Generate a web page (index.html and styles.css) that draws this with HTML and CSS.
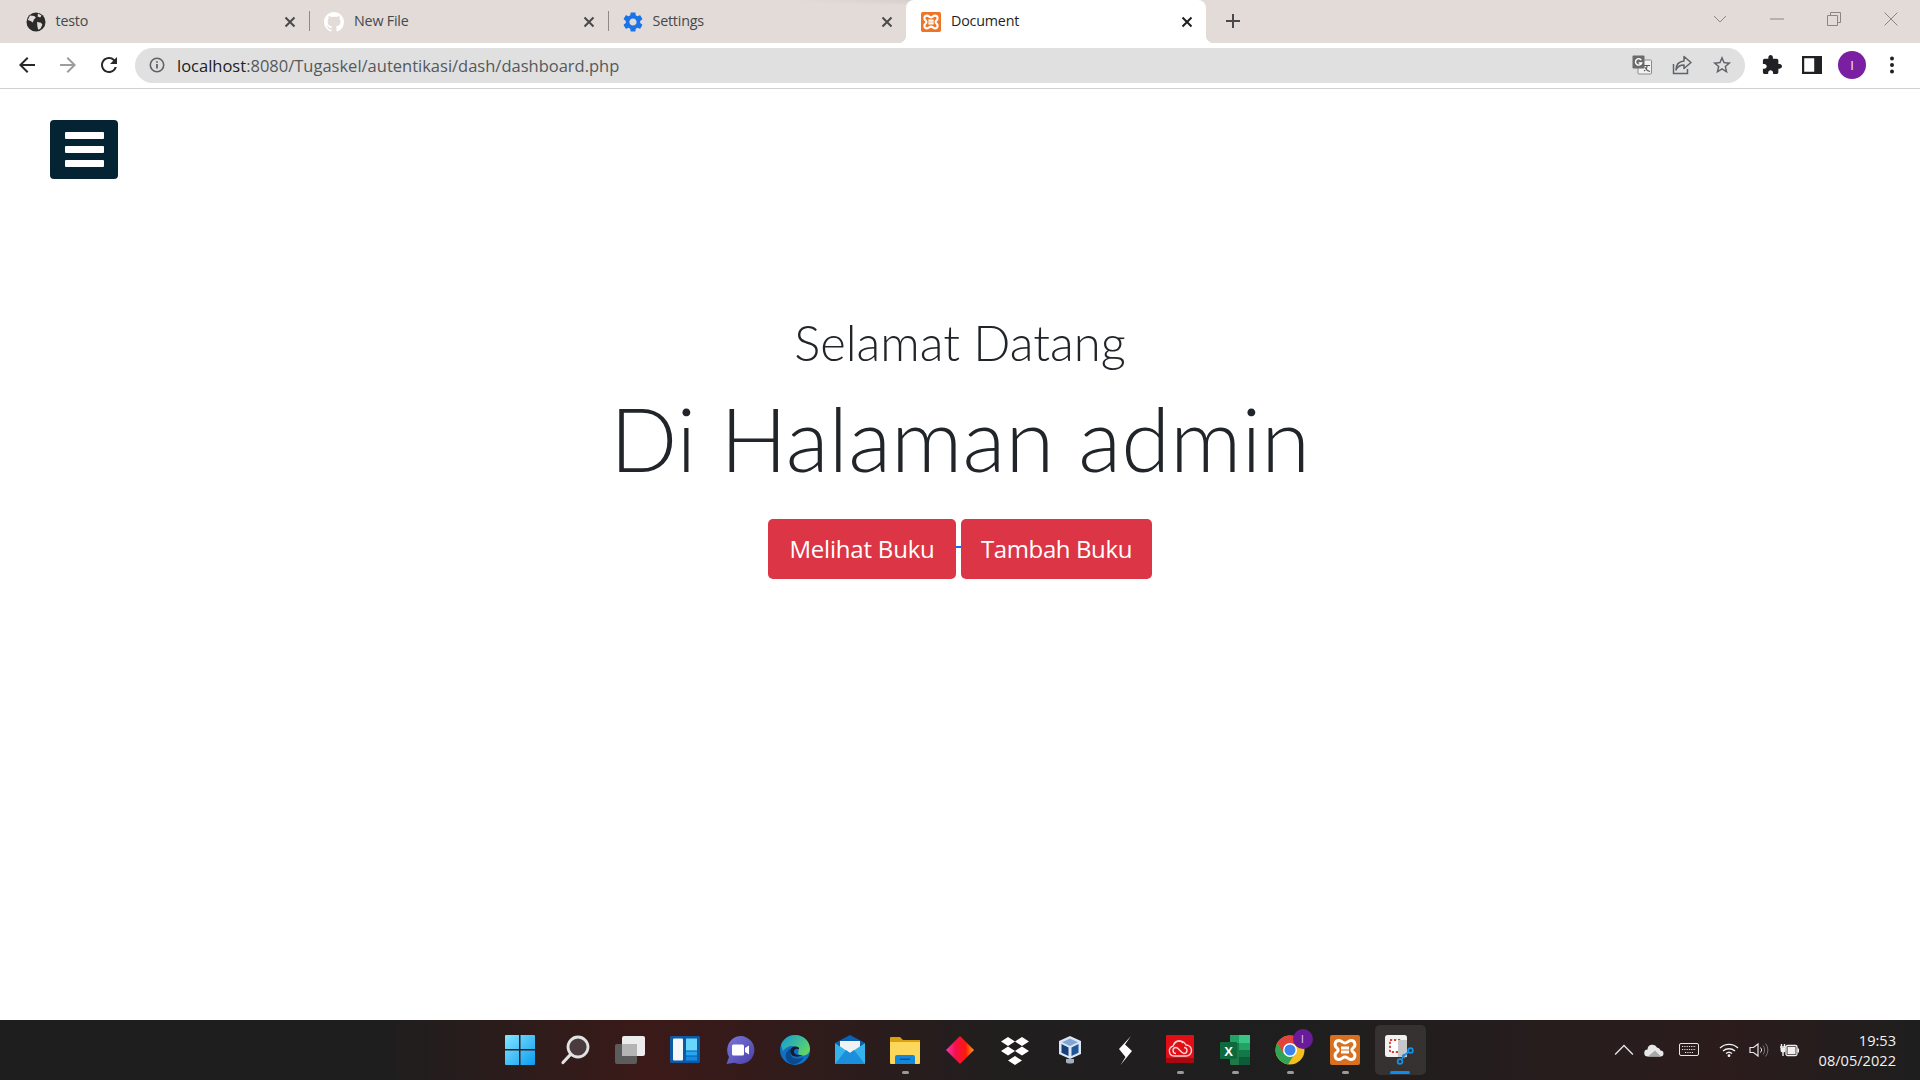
FILE: index.html
```html
<!DOCTYPE html>
<html lang="id">
<head>
<meta charset="utf-8">
<title>Document</title>
<link rel="stylesheet" href="styles.css">
</head>
<body>
<div class="tabstrip">
  <div class="tab sep">
    <svg class="favicon" viewBox="0 0 20 20"><circle cx="10" cy="10" r="9.5" fill="#2b2b2b"/><path d="M4 3.6l4.2.4 1.6 1.6-2 2.2-1 2.6L4.6 9 1.8 8zM12 1.6l3.6 1.8-1.4 2.2-2.6-1zM11 10l4 .8 1.4 2-2 4-2.2 1-.8-3.4z" fill="#e2dbd8"/></svg>
    <span class="tab-title">testo</span>
    <svg class="tab-close" viewBox="0 0 12 12"><path d="M1.5 1.5l9 9M10.5 1.5l-9 9"/></svg>
  </div>
  <div class="tab sep">
    <svg class="favicon" viewBox="0 0 16 16"><path fill="#fff" d="M8 0C3.58 0 0 3.58 0 8c0 3.54 2.29 6.53 5.47 7.59.4.07.55-.17.55-.38 0-.19-.01-.82-.01-1.49-2.01.37-2.53-.49-2.69-.94-.09-.23-.48-.94-.82-1.13-.28-.15-.68-.52-.01-.53.63-.01 1.08.58 1.23.82.72 1.21 1.87.87 2.33.66.07-.52.28-.87.51-1.07-1.78-.2-3.64-.89-3.64-3.95 0-.87.31-1.59.82-2.15-.08-.2-.36-1.02.08-2.12 0 0 .67-.21 2.2.82.64-.18 1.32-.27 2-.27.68 0 1.36.09 2 .27 1.53-1.04 2.2-.82 2.2-.82.44 1.1.16 1.92.08 2.12.51.56.82 1.27.82 2.15 0 3.07-1.87 3.75-3.65 3.95.29.25.54.73.54 1.48 0 1.07-.01 1.93-.01 2.2 0 .21.15.46.55.38A8.013 8.013 0 0016 8c0-4.42-3.58-8-8-8z"/></svg>
    <span class="tab-title">New File</span>
    <svg class="tab-close" viewBox="0 0 12 12"><path d="M1.5 1.5l9 9M10.5 1.5l-9 9"/></svg>
  </div>
  <div class="tab">
    <svg class="favicon" viewBox="2 2 20 20"><path fill="#1a73e8" d="M19.14 12.94c.04-.3.06-.61.06-.94 0-.32-.02-.64-.07-.94l2.03-1.58c.18-.14.23-.41.12-.61l-1.92-3.32c-.12-.22-.37-.29-.59-.22l-2.39.96c-.5-.38-1.03-.7-1.62-.94l-.36-2.54c-.04-.24-.24-.41-.48-.41h-3.84c-.24 0-.43.17-.47.41l-.36 2.54c-.59.24-1.13.57-1.62.94l-2.39-.96c-.22-.08-.47 0-.59.22L2.74 8.87c-.12.21-.08.47.12.61l2.03 1.58c-.05.3-.09.63-.09.94s.02.64.07.94l-2.03 1.58c-.18.14-.23.41-.12.61l1.92 3.32c.12.22.37.29.59.22l2.39-.96c.5.38 1.03.7 1.62.94l.36 2.54c.05.24.24.41.48.41h3.84c.24 0 .44-.17.47-.41l.36-2.54c.59-.24 1.13-.56 1.62-.94l2.39.96c.22.08.47 0 .59-.22l1.92-3.32c.12-.22.07-.47-.12-.61l-2.01-1.58zM12 15.6c-1.98 0-3.6-1.62-3.6-3.6s1.62-3.6 3.6-3.6 3.6 1.62 3.6 3.6-1.62 3.6-3.6 3.6z"/></svg>
    <span class="tab-title">Settings</span>
    <svg class="tab-close" viewBox="0 0 12 12"><path d="M1.5 1.5l9 9M10.5 1.5l-9 9"/></svg>
  </div>
  <div class="tab active">
    <svg class="favicon" viewBox="0 0 30 30"><rect width="30" height="30" rx="2.500" fill="#ee7526"/><path d="M9 5.500c3 0 3.500 2.500 6 2.500s3-2.500 6-2.500c4.500 0 5 5.500 2 7.500-1.500 1-1.500 3 0 4 3 2 2.500 7.500-2 7.500-3 0-3.500-2.500-6-2.500s-3 2.500-6 2.500c-4.500 0-5-5.500-2-7.500 1.500-1 1.500-3 0-4-3-2-2.500-7.500 2-7.500zM11 13h8M11 17h8" fill="none" stroke="#fff" stroke-width="3.200"/></svg>
    <span class="tab-title">Document</span>
    <svg class="tab-close" viewBox="0 0 12 12"><path d="M1.5 1.5l9 9M10.500 1.500l-9 9"/></svg>
  </div>
  <svg class="new-tab" viewBox="0 0 14 14"><path d="M7 0v14M0 7h14"/></svg>
  <div class="win-controls">
    <svg class="win-btn" viewBox="0 0 14 8"><path d="M1 1l6 6 6-6"/></svg>
    <svg class="win-btn" viewBox="0 0 14 14"><path d="M0 7h14"/></svg>
    <svg class="win-btn" viewBox="0 0 14 14"><path d="M.5 3.500h10v10H.5zM3.500 3.500V.5h10v10h-3"/></svg>
    <svg class="win-btn" viewBox="0 0 14 14"><path d="M.5.5l13 13M13.500.5l-13 13"/></svg>
  </div>
</div>

<div class="toolbar">
  <svg class="nav-icon" viewBox="0 0 24 24"><path fill="#27282b" d="M20 11H7.830l5.590-5.590L12 4l-8 8 8 8 1.410-1.410L7.830 13H20v-2z"/></svg>
  <svg class="nav-icon" viewBox="0 0 24 24"><path fill="#9b9ea1" d="M4 13h12.170l-5.590 5.590L12 20l8-8-8-8-1.410 1.410L16.170 11H4v2z"/></svg>
  <svg class="nav-icon" viewBox="0 0 24 24"><path fill="#27282b" d="M17.650 6.350A7.958 7.958 0 0012 4c-4.420 0-7.990 3.580-7.990 8s3.570 8 7.990 8c3.730 0 6.840-2.550 7.730-6h-2.080A5.990 5.990 0 0112 18c-3.310 0-6-2.690-6-6s2.690-6 6-6c1.660 0 3.140.690 4.220 1.780L13 11h7V4l-2.350 2.350z"/></svg>
  <div class="omnibox">
    <svg class="info" viewBox="0 0 16 16"><circle cx="8" cy="8" r="6.700" fill="none" stroke="#5f6368" stroke-width="1.600"/><path d="M8 7v4.500M8 4.300v1.400" stroke="#5f6368" stroke-width="1.800"/></svg>
    <span class="url"><span class="host">localhost</span>:8080/Tugaskel/autentikasi/dash/dashboard.php</span>
    <svg class="omni-icon" viewBox="0 0 20 20"><rect x="6" y="5" width="13.500" height="14" rx="1" fill="#f2f2f2" stroke="#8a8a8a"/><rect x=".5" y=".5" width="12" height="13" rx="1" fill="#6a6a6a"/><path d="M9.300 5A3.200 3.200 0 1 0 9.700 8H6.700" fill="none" stroke="#fff" stroke-width="1.400"/><path d="M12 10.500h6M15 10.500v1c0 2-1.500 3.500-3 4.500M13 12.500c1 2 3 3.500 5 4" fill="none" stroke="#555" stroke-width="1.200"/></svg>
    <svg class="omni-icon" viewBox="0 0 20 20"><path d="M1.500 9v9.500h14V14" fill="none" stroke="#5f6368" stroke-width="1.500"/><path d="M12 1.500l7 6-7 6V10C8 10 5.500 11.500 4 15c0-5 3-8.500 8-9z" fill="none" stroke="#5f6368" stroke-width="1.500" stroke-linejoin="round"/></svg>
    <svg class="omni-icon" viewBox="1 1 22 22"><path fill="#5f6368" d="M22 9.240l-7.190-.620L12 2 9.190 8.630 2 9.240l5.460 4.730L5.820 21 12 17.270 18.180 21l-1.630-7.030L22 9.240zM12 15.400l-3.760 2.270 1-4.280-3.320-2.880 4.380-.380L12 6.100l1.710 4.040 4.380.380-3.320 2.880 1 4.280L12 15.400z"/></svg>
  </div>
  <div class="tool-group">
    <svg class="tool-icon" viewBox="1 1 22 22"><path fill="#202124" d="M20.500 11H19V7c0-1.100-.9-2-2-2h-4V3.500C13 2.120 11.880 1 10.500 1S8 2.120 8 3.500V5H4c-1.100 0-1.990.9-1.990 2v3.800H3.500c1.490 0 2.700 1.210 2.700 2.700s-1.210 2.700-2.700 2.700H2V20c0 1.100.9 2 2 2h3.800v-1.500c0-1.490 1.210-2.700 2.700-2.700 1.490 0 2.700 1.210 2.700 2.700V22H17c1.100 0 2-.9 2-2v-4h1.500c1.380 0 2.500-1.120 2.500-2.500S21.880 11 20.500 11z"/></svg>
    <svg class="tool-icon" viewBox="0 0 18 16"><path fill-rule="evenodd" fill="#202124" d="M0 0h18v16H0zM2 2v12h9V2z"/></svg>
    <div class="avatar">I</div>
    <svg class="tool-icon" viewBox="0 0 20 20"><circle cx="10" cy="3.500" r="2" fill="#202124"/><circle cx="10" cy="10" r="2" fill="#202124"/><circle cx="10" cy="16.500" r="2" fill="#202124"/></svg>
  </div>
</div>

<main class="page">
  <button class="menu-btn" type="button" aria-label="Menu"><span></span><span></span><span></span></button>
  <section class="hero">
    <p class="hero-small">Selamat Datang</p>
    <h1 class="hero-big">Di Halaman admin</h1>
    <div class="hero-actions">
      <a class="red-btn" href="#">Melihat Buku</a>
      <span class="link-gap"></span>
      <a class="red-btn wide" href="#">Tambah Buku</a>
    </div>
  </section>
</main>

<footer class="taskbar">
  <div></div>
  <div class="task-icons">
    <div class="task"><svg viewBox="0 0 30 30"><defs><linearGradient id="w" x1="0" y1="0" x2="1" y2="1"><stop offset="0" stop-color="#85e6ff"/><stop offset="1" stop-color="#0b9cf0"/></linearGradient></defs><path fill="url(#w)" d="M0 1a1 1 0 0 1 1-1h13v14H0zM15.500 0H29a1 1 0 0 1 1 1v13H15.500zM0 15.500h14V30H1a1 1 0 0 1-1-1zM15.500 15.500H30V29a1 1 0 0 1-1 1H15.500z"/></svg></div>
    <div class="task"><svg viewBox="0 0 30 30"><circle cx="18" cy="12" r="10" fill="#4a3c3e" stroke="#e2e2e2" stroke-width="2.800"/><path d="M10.500 19.500L3 27.500" stroke="#e2e2e2" stroke-width="3.200" stroke-linecap="round"/></svg></div>
    <div class="task"><svg viewBox="0 0 30 30"><rect y="9" width="22" height="20" rx="2" fill="#5c5c5c"/><rect x="7" y="1" width="23" height="20" rx="2" fill="#ececec"/><rect x="7" y="9" width="15" height="12" fill="#b4b4b4"/></svg></div>
    <div class="task"><svg viewBox="0 0 30 30"><rect y="1" width="30" height="27" rx="1.500" fill="#0c5aa6"/><rect x="3" y="3.500" width="10" height="22" rx="1" fill="#f4f6f8"/><rect x="16" y="3.500" width="11" height="12" fill="#69d5fb"/><rect x="16" y="16.500" width="11" height="4" fill="#2aa5ef"/><rect x="16" y="21.500" width="11" height="4" fill="#0f8de6"/></svg></div>
    <div class="task"><svg viewBox="0 0 30 30"><defs><linearGradient id="c" x1="0" y1="0" x2="1" y2="1"><stop offset="0" stop-color="#7a78dd"/><stop offset="1" stop-color="#4a3fa8"/></linearGradient></defs><path fill="url(#c)" d="M15.500 1a14 14 0 1 1-6 26.700L1.500 29l2.500-7A14 14 0 0 1 15.500 1z"/><rect x="7" y="9.500" width="12" height="11" rx="1.500" fill="#fff"/><path d="M20 13l4-2.500v9L20 17z" fill="#fff"/></svg></div>
    <div class="task"><svg viewBox="0 0 30 30"><defs><linearGradient id="e1" x1="0" y1="0" x2="1" y2=".6"><stop offset="0" stop-color="#0f9bd8"/><stop offset="1" stop-color="#5fd36a"/></linearGradient></defs><circle cx="15" cy="15" r="15" fill="#1170c4"/><path fill="url(#e1)" d="M1 10C3 4 9 0 15 0c9 0 15 6.500 15 14 0 4-3 6.500-7 6.500-3 0-5-1-5-2.500 2-3-1-7-6-7-4 0-7 2-9 5z"/><path d="M24 22c-3 5-8 8-12 7-5-1-7-6-6-10 1-4 5-6.500 9-5.500-4 1-5 4-4 7 1.500 3.500 7 4 13 1.500z" fill="#0a4a8f"/><path d="M10.500 16c0-3 2-4.500 5-4.500 2.500 0 4 1 3.500 3-1.500-1.500-5-1-5 2 0 3 4 4 8 3.500-3 2.500-11.500 3-11.500-4z" fill="#1a1c2c"/></svg></div>
    <div class="task"><svg viewBox="0 0 30 30"><path d="M0 8L15 0l15 8-15 9z" fill="#0a62b5"/><path d="M5 6h20v9l-10 5-10-5z" fill="#f2f2f2"/><path d="M0 8l15 10L30 8v21H0z" fill="#35b4ec"/><path d="M0 29l11-14 4 3 4-3 11 14z" fill="#1b8fdb"/></svg></div>
    <div class="task"><svg viewBox="0 0 30 30"><path d="M0 3a1 1 0 0 1 1-1h9l3 3h17v8H0z" fill="#dba012"/><path d="M0 7h30v21a1 1 0 0 1-1 1H1a1 1 0 0 1-1-1z" fill="#fbd75b"/><path d="M5 22a2 2 0 0 1 2-2h16a2 2 0 0 1 2 2v7H5z" fill="#1089dc"/><rect x="10" y="23.500" width="10" height="1.500" fill="#0b4f91"/></svg></div>
    <div class="task"><svg viewBox="0 0 30 30"><defs><linearGradient id="d"><stop offset="0" stop-color="#f53ab0"/><stop offset=".35" stop-color="#f50f4b"/><stop offset=".7" stop-color="#fb1a0a"/><stop offset="1" stop-color="#fda11c"/></linearGradient></defs><path d="M15 1l14 14-14 14L1 15z" fill="url(#d)"/></svg></div>
    <div class="task"><svg viewBox="0 0 30 30"><path fill="#fff" d="M8 2l7 4.500L8 11 1 6.500zM22 2l7 4.500-7 4.500-7-4.500zM8 11.500l7 4.500-7 4.500L1 16zM22 11.500l7 4.500-7 4.500-7-4.500zM15 21l7 4.500-7 4.500-7-4.500z"/></svg></div>
    <div class="task"><svg viewBox="0 0 30 30"><path d="M15 1l11 5v13l-11 5-11-5V6z" fill="#dbe6f5"/><path d="M15 3.500l8 3.700-8 3.700-8-3.700z" fill="#7fa5d6"/><path d="M6.500 9l7 3.500v8.500l-7-3.300z" fill="#183f77"/><path d="M23.500 9l-7 3.500v8.500l7-3.300z" fill="#1f5596"/><path d="M11 24h8v3c0 2-8 2-8 0z" fill="#9fb0c4"/></svg></div>
    <div class="task"><svg viewBox="0 0 30 30"><path d="M21 1L9 14l6.500 8-5 8L22 16l-7-6.500z" fill="#fff"/></svg></div>
    <div class="task has-run"><svg viewBox="0 0 30 30"><rect x="1" width="28" height="28" rx="1" fill="#e30d15"/><rect x="1" y="23" width="28" height="5" fill="#a90810"/><g fill="none" stroke="#f7d5d5" stroke-width="1.400"><path d="M9 21a5 5 0 0 1-1-9.800A7 7 0 0 1 21 10a5.500 5.500 0 0 1 0 11z"/><path d="M11 18.500a3 3 0 0 1 0-6c3 0 5 6 8 6a3 3 0 0 0 0-6"/><path d="M9 9.500a5 5 0 0 1 9-1.500"/></g></svg></div>
    <div class="task has-run"><svg viewBox="0 0 30 30"><rect x="10" y="0" width="20" height="30" rx="1" fill="#1d7a45"/><rect x="19" y="0" width="11" height="8" fill="#38c585"/><rect x="10" y="0" width="9" height="8" fill="#22a366"/><rect x="19" y="8" width="11" height="7" fill="#22a366"/><rect x="19" y="15" width="11" height="7" fill="#137a47"/><rect x="19" y="22" width="11" height="8" fill="#0d5c37"/><rect y="7" width="17" height="17" rx="1" fill="#0e6a3c"/><text x="8.500" y="20.500" class="excel-x">X</text></svg></div>
    <div class="task has-badge has-run"><svg viewBox="0 0 30 30"><circle cx="15" cy="15" r="14.500" fill="#f2bf1f"/><path d="M15 .5A14.500 14.500 0 0 0 2.300 8L8.500 19 15 9h13A14.500 14.500 0 0 0 15 .5z" fill="#e2433a"/><path d="M2.300 8A14.500 14.500 0 0 0 13 29.400L19.500 19H9z" fill="#31a354"/><circle cx="15" cy="15" r="7" fill="#fff"/><circle cx="15" cy="15" r="5.500" fill="#3b83ee"/></svg><span class="badge">I</span></div>
    <div class="task has-run"><svg viewBox="0 0 30 30"><rect width="30" height="30" rx="2" fill="#d9701f"/><path d="M9 5.500c3 0 3.500 2.500 6 2.500s3-2.500 6-2.500c4.500 0 5 5.500 2 7.500-1.500 1-1.500 3 0 4 3 2 2.500 7.500-2 7.500-3 0-3.500-2.500-6-2.500s-3 2.500-6 2.500c-4.500 0-5-5.500-2-7.500 1.500-1 1.500-3 0-4-3-2-2.500-7.500 2-7.500zM11 13h8M11 17h8" fill="none" stroke="#fff" stroke-width="3"/></svg></div>
    <div class="task current"><svg viewBox="0 0 30 30"><rect width="22" height="22" rx="2.500" fill="#f1f1f1"/><rect x="5" y="5" width="12" height="12" fill="#fff" stroke="#d9402f" stroke-width="1.800" stroke-dasharray="2.200 1.800"/><rect x="13" y="5" width="9" height="17" fill="#c7c7c7"/><path d="M17 20l3 3" stroke="#888" stroke-width="1.500"/><g fill="none" stroke="#1590e4" stroke-width="1.700"><circle cx="25.500" cy="15.500" r="2.400"/><circle cx="15" cy="26.500" r="2.400"/><path d="M23.500 17L18.500 21M17 24.500L19 19"/></g></svg></div>
  </div>
  <div class="tray">
    <svg class="tray-icon" viewBox="0 0 18 10"><path d="M1 9l8-8 8 8" fill="none" stroke="#e6e6e6" stroke-width="1.200"/></svg>
    <svg class="tray-icon tray-cloud" viewBox="0 0 20 14"><path d="M4 13.500a3.500 3.500 0 0 1-.5-7 5 5 0 0 1 9.500-2 4 4 0 0 1 3.500 3 3 3 0 0 1 0 6z" fill="#e8e8e8"/><path d="M4 13.500l7-6 6 6z" fill="#a8a8a8"/></svg>
    <svg class="tray-icon" viewBox="0 0 20 14"><rect x=".5" y=".5" width="19" height="12" rx="1.500" fill="none" stroke="#e6e6e6"/><path d="M3 3.500h14M3 6.500h14M6 9.500h8" stroke="#e6e6e6" stroke-dasharray="1.200 1.100" fill="none"/></svg>
    <svg class="tray-icon wide-gap" viewBox="0 0 20 15"><path d="M1 5.500a13 13 0 0 1 18 0M4 8.500a9 9 0 0 1 12 0M7 11a4.500 4.500 0 0 1 6 0" fill="none" stroke="#f0f0f0" stroke-width="1.400"/><circle cx="10" cy="13.200" r="1.400" fill="#f0f0f0"/></svg>
    <svg class="tray-icon" viewBox="0 0 20 16"><path d="M1 5.500h3.500L9 2v12L4.500 10.500H1z" fill="none" stroke="#e6e6e6" stroke-width="1.200"/><path d="M11.500 5.500a3.500 3.500 0 0 1 0 5" fill="none" stroke="#e6e6e6"/><path d="M14 3.500a7 7 0 0 1 0 9M16.500 1.500a10 10 0 0 1 0 13" fill="none" stroke="#777"/></svg>
    <svg class="tray-icon" viewBox="0 0 20 16"><path d="M1 5h6M2.500 2v3M5.500 2v3M4 9v5" stroke="#f0f0f0" stroke-width="1.400" fill="none"/><path d="M1.500 5.500h5V8a2.500 2.500 0 0 1-5 0z" fill="#f0f0f0"/><rect x="7" y="3.500" width="11" height="10" rx="1.500" fill="#3a2a2a" stroke="#f0f0f0" stroke-width="1.300"/><rect x="8.500" y="5" width="8" height="7" fill="#f0f0f0"/><rect x="18.500" y="6.500" width="1.500" height="4" fill="#f0f0f0"/></svg>
    <div class="clock"><span>19:53</span><span>08/05/2022</span></div>
  </div>
</footer>
</body>
</html>
```
FILE: styles.css
```css
* { box-sizing: border-box; }
html, body { margin: 0; height: 100%; }
body {
  display: flex;
  flex-direction: column;
  height: 100vh;
  overflow: hidden;
  background: #fff;
  font-family: "Open Sans", "Liberation Sans", sans-serif;
  color: #212529;
}

/* tab strip */
.tabstrip {
  display: flex;
  align-items: stretch;
  height: 43px;
  flex: none;
  padding-left: 10.5px;
  background: radial-gradient(ellipse 170px 6px at 960px 0, rgba(0,0,0,.07), transparent), #e2dbd8;
}
.tab {
  position: relative;
  display: flex;
  align-items: center;
  width: 298.5px;
  padding: 0 13px 0 15px;
  flex: none;
  color: #45484c;
  font-size: 14.3px;
  letter-spacing: -.2px;
}
.tab.sep::after {
  content: "";
  position: absolute;
  right: -1px;
  top: 11px;
  height: 20px;
  width: 1px;
  background: #8f8a88;
}
.tab.active {
  width: 300px;
  background: #fff;
  border-radius: 8px 8px 0 0;
  color: #1f1f1f;
}
.tab.active::before,
.tab.active::after {
  content: "";
  position: absolute;
  bottom: 0;
  width: 8px;
  height: 8px;
}
.tab.active::before { left: -8px; background: radial-gradient(circle at 0 0, transparent 8px, #fff 8.5px); }
.tab.active::after { right: -8px; background: radial-gradient(circle at 100% 0, transparent 8px, #fff 8.5px); }
.favicon { width: 20px; height: 20px; flex: none; }
.tab-title { flex: 1; padding: 0 0 2px 10px; white-space: nowrap; }
.tab-close { width: 12px; height: 12px; flex: none; fill: none; stroke: #4a4a4a; stroke-width: 2; }
.active .tab-close { stroke: #1f1f1f; }
.new-tab { width: 14px; height: 14px; margin: 14px 0 0 20px; flex: none; fill: none; stroke: #4a4a4a; stroke-width: 2; }
.win-controls {
  margin-left: auto;
  display: flex;
  align-items: flex-start;
  gap: 43px;
  padding: 12px 22px 0 0;
}
.win-btn { width: 14px; height: 14px; fill: none; stroke: #8a8684; stroke-width: 1; }

/* toolbar */
.toolbar {
  display: flex;
  align-items: center;
  flex: none;
  height: 46px;
  padding: 0 18px 1px 15px;
  background: #fff;
  border-bottom: 1px solid #d2d2d2;
}
.nav-icon { width: 24px; height: 24px; margin-right: 17px; flex: none; }
.omnibox {
  display: flex;
  align-items: center;
  flex: 1;
  height: 35px;
  margin-left: -3px;
  padding: 0 13px 0 14px;
  background: #e0e0e0;
  border-radius: 18px;
}
.info { width: 16px; height: 16px; flex: none; }
.url { flex: 1; padding-left: 12px; color: #55585c; font-size: 16.5px; white-space: nowrap; }
.host { color: #202124; }
.omni-icon { width: 20px; height: 20px; margin-left: 20px; flex: none; }
.tool-group { display: flex; align-items: center; gap: 20px; margin-left: 17px; }
.tool-icon { width: 20px; height: 20px; flex: none; }
.avatar {
  display: flex;
  align-items: center;
  justify-content: center;
  width: 28px;
  height: 28px;
  margin: 0 -4px;
  border-radius: 50%;
  background: #7b1fa2;
  color: #f3e5f5;
  font-size: 13px;
}

/* page */
.page { flex: 1; min-height: 0; padding: 31px 0 0 50px; }
.menu-btn {
  display: flex;
  flex-direction: column;
  justify-content: center;
  align-items: center;
  gap: 7.5px;
  width: 68px;
  height: 59px;
  padding: 0;
  border: 0;
  border-radius: 4px;
  background: #052433;
}
.menu-btn span { display: block; width: 39px; height: 6.5px; border-radius: 1px; background: #fff; }
.hero { margin: 0 0 0 -50px; padding-top: 134px; text-align: center; font-family: Lato, "Open Sans", sans-serif; font-weight: 300; }
.hero-small { margin: 0; font-size: 49px; line-height: 1.2; }
.hero-big { margin: 13px 0 0; font-size: 88.7px; font-weight: 300; line-height: 1.2; }
.hero-actions { display: flex; justify-content: center; align-items: center; margin-top: 28px; }
.link-gap { width: 5px; height: 2px; margin-top: -5px; background: #0d6efd; }
.red-btn {
  display: block;
  width: 188px;
  height: 60px;
  border-radius: 5px;
  background: #dc3545;
  color: #fff;
  font-family: "Open Sans", sans-serif;
  font-size: 24px;
  font-weight: 400;
  letter-spacing: -.2px;
  line-height: 60px;
  text-align: center;
  text-decoration: none;
}
.red-btn.wide { width: 191px; letter-spacing: -.4px; }

/* taskbar */
.taskbar {
  display: grid;
  grid-template-columns: 1fr auto 1fr;
  align-items: center;
  flex: none;
  height: 60px;
  background: linear-gradient(90deg, #1e1e1e 20%, #3b1a18 34%, #211e1e 52%, #1f1e1e 68%, #2c1c1c 90%, #1e1e1e 100%);
}
.task-icons { display: flex; }
.task {
  position: relative;
  display: flex;
  align-items: center;
  justify-content: center;
  width: 55px;
  height: 60px;
}
.task svg { width: 30px; height: 30px; }
.task:nth-child(8)::after,
.has-run::after {
  content: "";
  position: absolute;
  left: 24px;
  bottom: 6px;
  width: 7px;
  height: 3px;
  border-radius: 2px;
  background: #9a9a9a;
}
.current::before {
  content: "";
  position: absolute;
  top: 5px;
  bottom: 5px;
  left: 2px;
  right: 2px;
  border-radius: 5px;
  background: rgba(255,255,255,.09);
}
.current svg { position: relative; }
.current::after {
  content: "";
  position: absolute;
  left: 17px;
  bottom: 6px;
  width: 20px;
  height: 3px;
  border-radius: 2px;
  background: #0a8cf0;
}
.excel-x { fill: #fff; font: 700 13px "Liberation Sans", sans-serif; text-anchor: middle; }
.badge {
  position: absolute;
  left: 30px;
  top: 9px;
  display: flex;
  align-items: center;
  justify-content: center;
  width: 20px;
  height: 20px;
  border-radius: 50%;
  background: #6a1b9a;
  color: #e8d8f0;
  font-size: 10px;
}
.tray {
  justify-self: end;
  display: flex;
  align-items: center;
  gap: 10px;
  padding-right: 24px;
}
.tray-icon { width: 20px; height: 16px; flex: none; }
.tray-cloud { margin-right: 5px; }
.wide-gap { margin-left: 10px; }
.clock {
  display: flex;
  flex-direction: column;
  align-items: flex-end;
  gap: 1px;
  margin-left: 10px;
  color: #f2f2f2;
  font-size: 14.6px;
  line-height: 19px;
}
```
